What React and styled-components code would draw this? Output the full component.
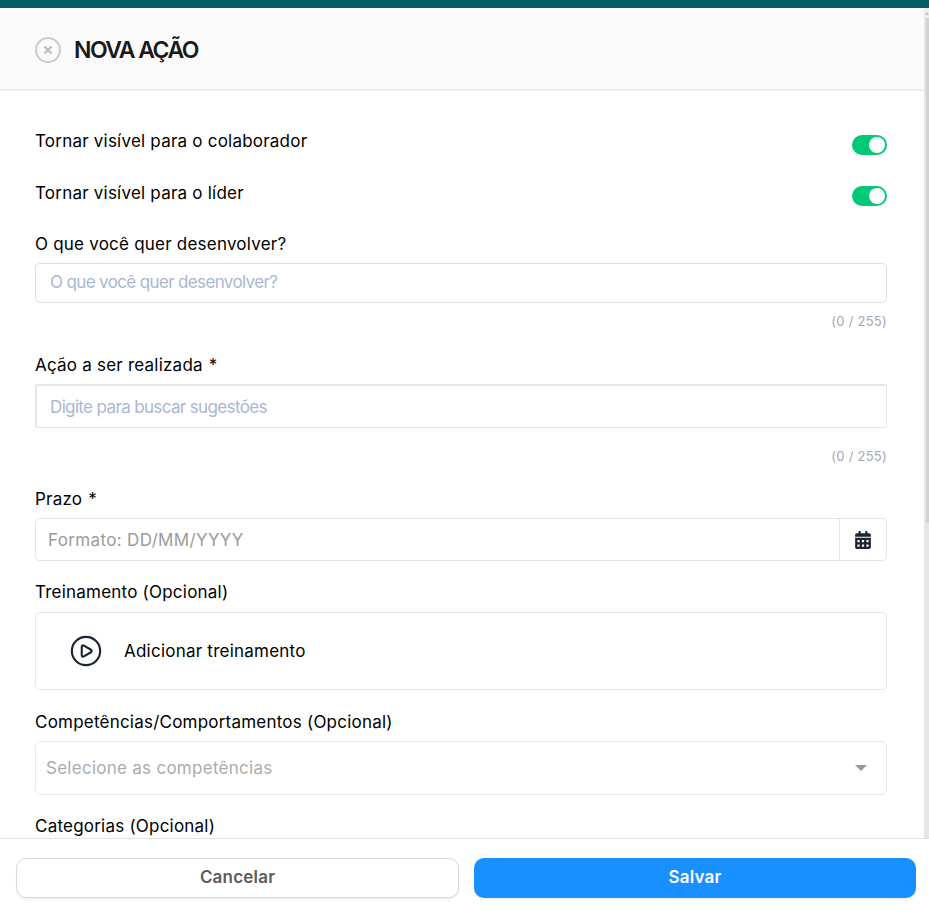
import React from "react";
import styled, { createGlobalStyle } from "styled-components";
import { CirclePlay } from "lucide-react";
import { FaCalendarAlt } from "react-icons/fa";

const GlobalStyle = createGlobalStyle`
    html, body {
        margin: 0;
        padding: 0;
        height: 100%;
        overflow: hidden;
        background: #fff;
        font-family: Inter, "Noto Sans", sans-serif;
    }
    #root {
        height: 100%;
    }
    * {
        box-sizing: border-box;
    }
`;

const Page = styled.div`
    height: 917px;
    display: flex;
    flex-direction: column;
    border-top: 8px solid #055c63;
`;

const Main = styled.div`
    flex: 1;
    min-height: 0;
    display: flex;
`;

const Scroller = styled.div`
    flex: 1;
    min-width: 0;
    overflow: hidden;
`;

const ScrollTrack = styled.div`
    flex: none;
    width: 5px;
    display: flex;
    flex-direction: column;
    background: #e6e6e6;
`;

const ScrollArrow = styled.div`
    height: 10px;
    display: flex;
    justify-content: flex-end;
    align-items: center;
    background: #eeeeee;
    &::after {
        content: "";
        border-style: solid;
        border-width: 0 2px 3px;
        border-color: transparent transparent #c4c4c4;
    }
`;

const ScrollThumb = styled.div`
    height: 505px;
    margin-left: 2px;
    background: #d2d2d2;
`;

const Header = styled.header`
    height: 83px;
    display: flex;
    align-items: center;
    gap: 13px;
    padding: 2px 0 0 35px;
    background: #fafafa;
    border-bottom: 2px solid #efefef;
`;

const CloseIcon = styled.svg`
    width: 26px;
    height: 26px;
    flex: none;
`;

const Title = styled.h1`
    margin: 0;
    font-size: 23px;
    line-height: 28px;
    font-weight: 600;
    letter-spacing: -1.5px;
    color: #1a1a1a;
`;

const Form = styled.form`
    padding: 38px 37px 0 35px;
`;

const ToggleRow = styled.div`
    display: flex;
    justify-content: space-between;
    align-items: flex-start;
    height: ${(p) => p.$height}px;
`;

const Label = styled.label`
    display: block;
    font-size: 17px;
    line-height: 24px;
    letter-spacing: 0.22px;
    color: #000;
    margin-top: ${(p) => p.$top || 0}px;
`;

const Required = styled.span`
    margin-left: 1px;
`;

const Toggle = styled.span`
    width: 35px;
    height: 20px;
    margin-top: ${(p) => p.$top}px;
    padding: 2px;
    display: flex;
    justify-content: flex-end;
    border-radius: 10px;
    background: #02c977;
    &::after {
        content: "";
        width: 16px;
        height: 16px;
        border-radius: 50%;
        background: #fff;
    }
`;

const TextInput = styled.input`
    display: block;
    width: 100%;
    height: ${(p) => p.$height}px;
    margin-top: 7px;
    padding: 0 14px ${(p) => (p.$thick ? 0 : 2)}px ${(p) => (p.$thick ? 13 : 14)}px;
    background: #fff;
    border-style: solid;
    border-width: ${(p) => (p.$thick ? "2px 1px 1px 2px" : "1px")};
    border-color: ${(p) => (p.$thick ? "#e6e6e6" : "#dedede")};
    border-radius: ${(p) => (p.$thick ? 2 : 5)}px;
    font-family: inherit;
    font-size: 17px;
    letter-spacing: -0.64px;
    outline: none;
    &::placeholder {
        color: #a8b7d3;
        opacity: 1;
    }
`;

const Counter = styled.div`
    margin-top: ${(p) => p.$top}px;
    font-size: 13px;
    line-height: 18px;
    letter-spacing: 0.25px;
    text-align: right;
    color: #a3a8b4;
`;

const DateField = styled.div`
    display: flex;
    height: 43px;
    margin-top: 7px;
    border: 1px solid #e4e4e4;
    border-radius: 5px;
`;

const DateInput = styled.input`
    flex: 1;
    min-width: 0;
    padding: 0 12px;
    border: 0;
    background: transparent;
    font-family: inherit;
    font-size: 17px;
    letter-spacing: 0.35px;
    outline: none;
    &::placeholder {
        color: #9b9b9b;
        opacity: 1;
    }
`;

const DateButton = styled.div`
    width: 47px;
    display: flex;
    align-items: center;
    justify-content: center;
    border-left: 1px solid #e4e4e4;
    color: #1f2530;
`;

const TrainingBox = styled.div`
    height: 78px;
    margin-top: 8px;
    display: flex;
    align-items: center;
    gap: 21px;
    padding-left: 33px;
    border: 1px solid #e0e6ee;
    border-radius: 5px;
    font-size: 17px;
    letter-spacing: 0.23px;
    color: #000;
    svg {
        color: #1b2433;
    }
`;

const SelectBox = styled.div`
    height: 54px;
    margin-top: 7px;
    display: flex;
    align-items: center;
    justify-content: space-between;
    padding: 0 19px 0 10px;
    border: 1px solid #e8e8e8;
    border-radius: 6px;
    font-size: 17px;
    letter-spacing: 0.27px;
    color: #ababab;
    &::after {
        content: "";
        border-style: solid;
        border-width: 6px 6px 0;
        border-color: #999 transparent transparent;
    }
`;

const Footer = styled.footer`
    flex: none;
    height: 79px;
    display: grid;
    grid-template-columns: 443px 442px;
    gap: 15px;
    padding: 19px 0 19px 16px;
    background: #fff;
    border-top: 1px solid #e2e2e2;
`;

const Button = styled.button`
    height: 40px;
    padding: 0 0 2px;
    border-radius: 10px;
    font-family: inherit;
    font-size: 17px;
    font-weight: 600;
    letter-spacing: 0.2px;
    border: ${(p) => (p.$primary ? "0" : "1px solid #d9d9d9")};
    background: ${(p) => (p.$primary ? "#1890ff" : "#fff")};
    color: ${(p) => (p.$primary ? "#fff" : "#5c5c5c")};
    box-shadow: 0 2px 2px rgba(0, 0, 0, 0.05);
`;

const App = () => {
    return (
        <Page>
            <GlobalStyle />
            <Main>
                <Scroller>
                    <Header>
                        <CloseIcon viewBox="0 0 26 26" fill="none">
                            <circle cx="13" cy="13" r="12" stroke="#cccccc" strokeWidth="2" />
                            <path d="M9.5 9.5l7 7M16.5 9.5l-7 7" stroke="#bdbdbd" strokeWidth="2.2" />
                        </CloseIcon>
                        <Title>NOVA AÇÃO</Title>
                    </Header>
                    <Form>
                        <ToggleRow $height={52}>
                            <Label>Tornar visível para o colaborador</Label>
                            <Toggle $top={6} />
                        </ToggleRow>
                        <ToggleRow $height={51}>
                            <Label>Tornar visível para o líder</Label>
                            <Toggle $top={5} />
                        </ToggleRow>
                        <Label>O que você quer desenvolver?</Label>
                        <TextInput $height={40} placeholder="O que você quer desenvolver?" />
                        <Counter $top={9}>(0 / 255)</Counter>
                        <Label $top={23}>Ação a ser realizada <Required>*</Required></Label>
                        <TextInput $height={44} $thick placeholder="Digite para buscar sugestões" />
                        <Counter $top={19}>(0 / 255)</Counter>
                        <Label $top={22}>Prazo <Required>*</Required></Label>
                        <DateField>
                            <DateInput placeholder="Formato: DD/MM/YYYY" />
                            <DateButton>
                                <FaCalendarAlt size={18} />
                            </DateButton>
                        </DateField>
                        <Label $top={19}>Treinamento (Opcional)</Label>
                        <TrainingBox>
                            <CirclePlay size={34} strokeWidth={1.5} />
                            Adicionar treinamento
                        </TrainingBox>
                        <Label $top={20}>Competências/Comportamentos (Opcional)</Label>
                        <SelectBox>Selecione as competências</SelectBox>
                        <Label $top={19}>Categorias (Opcional)</Label>
                    </Form>
                </Scroller>
                <ScrollTrack>
                    <ScrollArrow />
                    <ScrollThumb />
                </ScrollTrack>
            </Main>
            <Footer>
                <Button type="button">Cancelar</Button>
                <Button type="button" $primary>Salvar</Button>
            </Footer>
        </Page>
    );
};

export default App;
